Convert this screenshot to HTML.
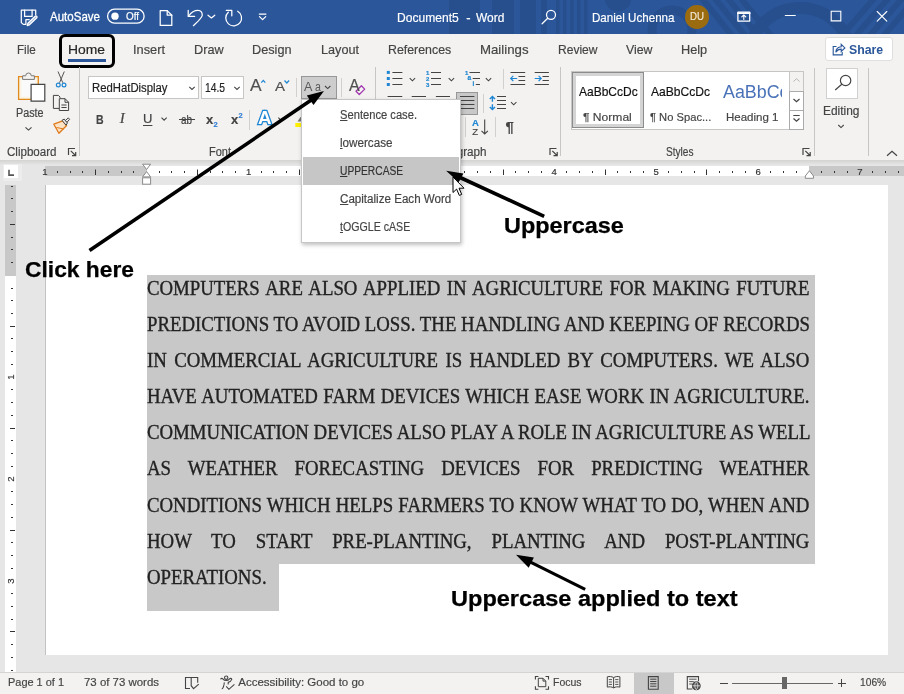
<!DOCTYPE html>
<html lang="en"><head><meta charset="utf-8"><title>Document5 - Word</title>
<style>

html,body{margin:0;padding:0}
body{width:904px;height:694px;position:relative;overflow:hidden;background:#e6e6e6;font-family:"Liberation Sans",sans-serif}
#app{position:absolute;left:0;top:0;width:904px;height:694px;overflow:hidden;will-change:transform}
.a{position:absolute}
.t{position:absolute;white-space:pre;display:inline-block;transform-origin:0 0;-webkit-text-stroke-width:.18px}
svg{position:absolute;overflow:visible}
.vs{position:absolute;width:1px;background:#c8c6c4}
.ln{position:absolute;white-space:pre;font:20px/1 "Liberation Serif",serif;color:#222;-webkit-text-stroke:.35px #222;left:147.200px;width:704.7px;transform-origin:0 0;text-align:justify;text-align-last:justify}
u{text-decoration:underline;text-underline-offset:1px}

</style></head>
<body>
<div id="app">
<div class="a" style="left:0px;top:0px;width:904px;height:33.5px;background:#2b579a"></div>
<svg style="left:0;top:0;overflow:hidden" width="904" height="34" viewBox="0 0 904 34"><g fill="none" stroke="#274f8e">
<path d="M449 0h31v34h-31zM492 0h22v34h-22zM520 0h16v34h-16zM541 0h6v34h-6zM556 0h3.500v34h-3.500zM563 0h3.500v34h-3.500zM570 0h3.500v34h-3.500zM577 0h3.500v34h-3.500zM584 0h3.500v34h-3.500z" fill="#274f8e" stroke="none"/>
<circle cx="618" cy="-2" r="13.500" fill="#274f8e" stroke="none"/>
<circle cx="672" cy="30" r="20" stroke-width="9"/>
<path d="M700 -4l34 42M713 -4l34 42M726 -4l34 42M739 -4l34 42" stroke-width="6"/>
<circle cx="800" cy="60" r="52" stroke-width="12"/>
<path d="M838 40l40-46M852 40l40-46M866 40l40-46M880 40l40-46" stroke-width="6"/>
</g></svg>
<span class="t" style="left:50.00px;top:10.00px;font:400 13px/1 'Liberation Sans',sans-serif;color:#fff;transform:scaleX(0.8869);-webkit-text-stroke:.3px #fff;">AutoSave</span>
<svg style="left:0;top:0" width="160" height="34" viewBox="0 0 160 34"><rect x="107.600" y="9.200" width="36.500" height="13.900" rx="6.950" fill="none" stroke="#fff" stroke-width="1.300"/><circle cx="115" cy="16.150" r="3.700" fill="#fff"/></svg>
<span class="t" style="left:125.80px;top:11.21px;font:400 10.5px/1 'Liberation Sans',sans-serif;color:#fff;transform:scaleX(0.9412);">Off</span>
<span class="t" style="left:397.30px;top:10.90px;font:400 13px/1 'Liberation Sans',sans-serif;color:#fff;transform:scaleX(0.9280);">Document5</span>
<span class="t" style="left:466.30px;top:10.90px;font:400 13px/1 'Liberation Sans',sans-serif;color:#fff;">-</span>
<span class="t" style="left:476.30px;top:10.90px;font:400 13px/1 'Liberation Sans',sans-serif;color:#fff;transform:scaleX(0.9180);">Word</span>
<span class="t" style="left:591.50px;top:10.90px;font:400 13px/1 'Liberation Sans',sans-serif;color:#fff;transform:scaleX(0.8917);">Daniel Uchenna</span>
<div class="a" style="left:685px;top:5.3px;width:23.5px;height:23.5px;border-radius:50%;background:#9a6b0f"></div>
<span class="t" style="left:689.80px;top:11.47px;font:400 11.5px/1 'Liberation Sans',sans-serif;color:#f3e9d6;transform:scaleX(0.8421);">DU</span>
<div class="a" style="left:0px;top:33.5px;width:904px;height:126.5px;background:#f3f2f1"></div>
<div class="a" style="left:0px;top:160px;width:904px;height:5px;background:linear-gradient(#d4d3d2,#e6e6e6)"></div>
<span class="t" style="left:16.80px;top:42.80px;font:400 13px/1 'Liberation Sans',sans-serif;color:#444;transform:scaleX(0.8972);">File</span>
<span class="t" style="left:68.00px;top:42.80px;font:400 13px/1 'Liberation Sans',sans-serif;color:#262626;transform:scaleX(1.0667);">Home</span>
<span class="t" style="left:133.00px;top:42.80px;font:400 13px/1 'Liberation Sans',sans-serif;color:#444;transform:scaleX(0.9841);">Insert</span>
<span class="t" style="left:194.30px;top:42.80px;font:400 13px/1 'Liberation Sans',sans-serif;color:#444;transform:scaleX(0.9788);">Draw</span>
<span class="t" style="left:252.30px;top:42.80px;font:400 13px/1 'Liberation Sans',sans-serif;color:#444;transform:scaleX(0.9761);">Design</span>
<span class="t" style="left:321.00px;top:42.80px;font:400 13px/1 'Liberation Sans',sans-serif;color:#444;transform:scaleX(0.9732);">Layout</span>
<span class="t" style="left:388.40px;top:42.80px;font:400 13px/1 'Liberation Sans',sans-serif;color:#444;transform:scaleX(0.9506);">References</span>
<span class="t" style="left:480.30px;top:42.80px;font:400 13px/1 'Liberation Sans',sans-serif;color:#444;transform:scaleX(1.0170);">Mailings</span>
<span class="t" style="left:558.30px;top:42.80px;font:400 13px/1 'Liberation Sans',sans-serif;color:#444;transform:scaleX(0.9267);">Review</span>
<span class="t" style="left:626.30px;top:42.80px;font:400 13px/1 'Liberation Sans',sans-serif;color:#444;transform:scaleX(0.9480);">View</span>
<span class="t" style="left:681.30px;top:42.80px;font:400 13px/1 'Liberation Sans',sans-serif;color:#444;transform:scaleX(0.9794);">Help</span>
<div class="a" style="left:68px;top:59px;width:38px;height:2.6000000000000014px;background:#2b579a"></div>
<div class="a" style="left:59px;top:34px;width:50px;height:28px;border:3px solid #000;border-radius:6px"></div>
<div class="a" style="left:825.200px;top:37.300px;width:65.500px;height:21.300px;background:#fff;border:1px solid #e1dfdd;border-radius:3px"></div>
<span class="t" style="left:848.80px;top:42.80px;font:700 13px/1 'Liberation Sans',sans-serif;color:#2b579a;transform:scaleX(0.9463);-webkit-text-stroke-width:0;">Share</span>
<div class="a" style="left:79px;top:67px;width:1px;height:89px;background:#c8c6c4"></div>
<div class="a" style="left:375px;top:67px;width:1px;height:89px;background:#c8c6c4"></div>
<div class="a" style="left:560px;top:67px;width:1px;height:89px;background:#c8c6c4"></div>
<div class="a" style="left:814px;top:68px;width:1px;height:88px;background:#c8c6c4"></div>
<div class="a" style="left:868px;top:68px;width:1px;height:88px;background:#c8c6c4"></div>
<div class="a" style="left:296.3px;top:78px;width:1.0px;height:19px;background:#d2d0ce"></div>
<div class="a" style="left:341px;top:78px;width:1px;height:19px;background:#d2d0ce"></div>
<div class="a" style="left:249px;top:109.5px;width:1px;height:20.5px;background:#d2d0ce"></div>
<div class="a" style="left:502.5px;top:69px;width:1.0px;height:20px;background:#d2d0ce"></div>
<div class="a" style="left:482.5px;top:94px;width:1.0px;height:19px;background:#d2d0ce"></div>
<div class="a" style="left:464.5px;top:117px;width:1.0px;height:20px;background:#d2d0ce"></div>
<div class="a" style="left:495px;top:117px;width:1px;height:20px;background:#d2d0ce"></div>
<span class="t" style="left:15.50px;top:106.64px;font:400 12px/1 'Liberation Sans',sans-serif;color:#444;transform:scaleX(0.8961);">Paste</span>
<span class="t" style="left:7.00px;top:145.84px;font:400 12px/1 'Liberation Sans',sans-serif;color:#444;transform:scaleX(0.9635);">Clipboard</span>
<span class="t" style="left:209.00px;top:145.84px;font:400 12px/1 'Liberation Sans',sans-serif;color:#444;transform:scaleX(0.9161);">Font</span>
<span class="t" style="left:431.50px;top:145.84px;font:400 12px/1 'Liberation Sans',sans-serif;color:#444;transform:scaleX(0.9724);">Paragraph</span>
<span class="t" style="left:665.50px;top:145.84px;font:400 12px/1 'Liberation Sans',sans-serif;color:#444;transform:scaleX(0.8413);">Styles</span>
<span class="t" style="left:823.00px;top:104.84px;font:400 12px/1 'Liberation Sans',sans-serif;color:#444;transform:scaleX(0.9945);">Editing</span>
<div class="a" style="left:88px;top:76px;width:108.800px;height:20.600px;background:#fff;border:1px solid #c8c6c4"></div>
<div class="a" style="left:201px;top:76px;width:40.800px;height:20.600px;background:#fff;border:1px solid #c8c6c4"></div>
<span class="t" style="left:91.50px;top:81.64px;font:400 12px/1 'Liberation Sans',sans-serif;color:#222;transform:scaleX(0.9432);">RedHatDisplay</span>
<span class="t" style="left:204.50px;top:81.64px;font:400 12px/1 'Liberation Sans',sans-serif;color:#222;transform:scaleX(0.8562);">14.5</span>
<div class="a" style="left:301.200px;top:76px;width:34.200px;height:21px;background:#cdcdcd;border:1px solid #979797"></div>
<span class="t" style="left:304.30px;top:80.76px;font:400 12.8px/1 'Liberation Sans',sans-serif;color:#5a5a5a;transform:scaleX(0.9828);-webkit-text-stroke-width:0;">A</span>
<span class="t" style="left:314.60px;top:80.76px;font:400 12.8px/1 'Liberation Sans',sans-serif;color:#5a5a5a;transform:scaleX(0.8281);-webkit-text-stroke-width:0;">a</span>
<div class="a" style="left:456.300px;top:92.300px;width:20px;height:20.600px;background:#c8c8c8;border:1px solid #979797"></div>
<span class="t" style="left:96.00px;top:112.57px;font:700 13.5px/1 'Liberation Sans',sans-serif;color:#444;transform:scaleX(0.7795);">B</span>
<span class="t" style="left:119.80px;top:111.44px;font:400 15px/1 'Liberation Serif',serif;color:#444;font-style:italic;">I</span>
<span class="t" style="left:143.00px;top:112.30px;font:400 13px/1 'Liberation Sans',sans-serif;color:#444;text-decoration:underline;text-underline-offset:1.5px;">U</span>
<span class="t" style="left:181.00px;top:113.84px;font:400 12px/1 'Liberation Sans',sans-serif;color:#444;transform:scaleX(0.8234);">ab</span>
<div class="a" style="left:178.5px;top:119.3px;width:16.0px;height:1.0px;background:#444"></div>
<span class="t" style="left:206.00px;top:113.00px;font:700 13px/1 'Liberation Sans',sans-serif;color:#444;">x</span>
<span class="t" style="left:213.50px;top:121.15px;font:700 7.5px/1 'Liberation Sans',sans-serif;color:#2b7cd3;">2</span>
<span class="t" style="left:231.00px;top:113.00px;font:700 13px/1 'Liberation Sans',sans-serif;color:#444;">x</span>
<span class="t" style="left:238.50px;top:111.65px;font:700 7.5px/1 'Liberation Sans',sans-serif;color:#2b7cd3;">2</span>
<div class="a" style="left:570.5px;top:70.5px;width:231.200px;height:57.300px;background:#fff;border:1px solid #c8c6c4"></div>
<div class="a" style="left:572.200px;top:72.200px;width:69.700px;height:53.800px;border:1px solid #8c8c8c;box-shadow:inset 0 0 0 3px #d4d4d4"></div>
<span class="t" style="left:578.80px;top:86.37px;font:400 12.2px/1 'Liberation Sans',sans-serif;color:#111;transform:scaleX(0.9847);">AaBbCcDc</span>
<span class="t" style="left:583.00px;top:110.88px;font:400 11.6px/1 'Liberation Sans',sans-serif;color:#444;transform:scaleX(1.0425);">¶ Normal</span>
<span class="t" style="left:650.50px;top:86.37px;font:400 12.2px/1 'Liberation Sans',sans-serif;color:#111;transform:scaleX(0.9898);">AaBbCcDc</span>
<span class="t" style="left:649.50px;top:110.88px;font:400 11.6px/1 'Liberation Sans',sans-serif;color:#444;transform:scaleX(0.9639);">¶ No Spac...</span>
<div class="a" style="left:720px;top:74px;width:61.5px;height:30px;overflow:hidden"><span class="t" style="left:2.50px;top:9.26px;font:400 18px/1 'Liberation Sans',sans-serif;color:#4a72b8;transform:scaleX(0.9917);-webkit-text-stroke-width:0;">AaBbCc</span></div>
<span class="t" style="left:725.50px;top:110.88px;font:400 11.6px/1 'Liberation Sans',sans-serif;color:#444;transform:scaleX(0.9932);">Heading 1</span>
<div class="a" style="left:789.4px;top:70.5px;width:12.300px;height:57.300px;background:#f3f2f1;border:1px solid #c8c6c4"></div>
<div class="a" style="left:789.4px;top:90.6px;width:12.300px;height:18.400px;background:#fff;border:1px solid #ababab"></div>
<div class="a" style="left:789.4px;top:109.6px;width:12.300px;height:18.200px;background:#fff;border:1px solid #ababab"></div>
<div class="a" style="left:825.800px;top:68.200px;width:30px;height:28.500px;background:#fff;border:1px solid #d2d0ce"></div>
<div class="a" style="left:44.5px;top:166px;width:859.5px;height:10px;background:#fff"></div>
<div class="a" style="left:44.5px;top:166px;width:102.0px;height:10px;background:#c8c8c8"></div>
<div class="a" style="left:809.3px;top:166px;width:94.70000000000005px;height:10px;background:#c8c8c8"></div>
<div class="a" style="left:3.3px;top:163.5px;width:18.500px;height:17.700px;background:#ececec"></div><div class="a" style="left:4px;top:165px;width:14.200px;height:12.800px;background:#fff"></div>
<svg style="left:0;top:0" width="904" height="190" viewBox="0 0 904 190"><path d="M9 169.800v5.300h5" fill="none" stroke="#555" stroke-width="1.600"/>
<path d="M57.5 171v2 M70.5 171v2 M82.5 171v2 M95.5 169.500v5.500 M108.5 171v2 M121.5 171v2 M133.5 171v2 M159.5 171v2 M171.5 171v2 M184.5 171v2 M197.5 169.500v5.500 M210.5 171v2 M222.5 171v2 M235.5 171v2 M261.5 171v2 M273.5 171v2 M286.5 171v2 M299.5 169.500v5.500 M312.5 171v2 M324.5 171v2 M337.5 171v2 M363.5 171v2 M375.5 171v2 M388.5 171v2 M401.5 169.500v5.500 M413.5 171v2 M426.5 171v2 M439.5 171v2 M464.5 171v2 M477.5 171v2 M490.5 171v2 M503.5 169.500v5.500 M515.5 171v2 M528.5 171v2 M541.5 171v2 M566.5 171v2 M579.5 171v2 M592.5 171v2 M605.5 169.500v5.500 M617.5 171v2 M630.5 171v2 M643.5 171v2 M668.5 171v2 M681.5 171v2 M694.5 171v2 M706.5 169.500v5.500 M719.5 171v2 M732.5 171v2 M745.5 171v2 M770.5 171v2 M783.5 171v2 M796.5 171v2 M821.5 171v2 M834.5 171v2 M847.5 171v2 M872.5 171v2 M885.5 171v2 M898.5 171v2" stroke="#333" stroke-width="1" fill="none"/>
<path d="M142.6 164.2h8l-4 5.3zM142.6 176.9l4-5.3 4 5.3z" fill="#fff" stroke="#8a8a8a" stroke-width="1"/><rect x="142.6" y="177.8" width="8" height="6.4" fill="#fff" stroke="#8a8a8a"/>
<path d="M805.300 178.300v-2.300l4.100-5.200 4.100 5.200v2.300z" fill="#fff" stroke="#8a8a8a" stroke-width="1"/>
</svg>
<span class="t" style="left:42.20px;top:166.86px;font:400 9.5px/1 'Liberation Sans',sans-serif;color:#333;">1</span>
<span class="t" style="left:245.90px;top:166.86px;font:400 9.5px/1 'Liberation Sans',sans-serif;color:#333;">1</span>
<span class="t" style="left:347.80px;top:166.86px;font:400 9.5px/1 'Liberation Sans',sans-serif;color:#333;">2</span>
<span class="t" style="left:449.70px;top:166.86px;font:400 9.5px/1 'Liberation Sans',sans-serif;color:#333;">3</span>
<span class="t" style="left:551.60px;top:166.86px;font:400 9.5px/1 'Liberation Sans',sans-serif;color:#333;">4</span>
<span class="t" style="left:653.50px;top:166.86px;font:400 9.5px/1 'Liberation Sans',sans-serif;color:#333;">5</span>
<span class="t" style="left:755.40px;top:166.86px;font:400 9.5px/1 'Liberation Sans',sans-serif;color:#333;">6</span>
<span class="t" style="left:857.30px;top:166.86px;font:400 9.5px/1 'Liberation Sans',sans-serif;color:#333;">7</span>
<div class="a" style="left:5px;top:185px;width:11px;height:487.5px;background:#fff"></div>
<div class="a" style="left:5px;top:185px;width:11px;height:90.80000000000001px;background:#c8c8c8"></div>
<div class="a" style="left:45.3px;top:185px;width:842.7px;height:470px;background:#fff;border-left:1px solid #c2c2c2;box-sizing:border-box"></div>
<svg style="left:0;top:0" width="20" height="672" viewBox="0 0 20 672"><path d="M11 186.5h2 M11 198.5h2 M11 211.5h2 M10 224.5h5 M11 237.5h2 M11 249.5h2 M11 262.5h2 M11 288.5h2 M11 300.5h2 M11 313.5h2 M10 326.5h5 M11 338.5h2 M11 351.5h2 M11 364.5h2 M11 389.5h2 M11 402.5h2 M11 415.5h2 M10 428.5h5 M11 440.5h2 M11 453.5h2 M11 466.5h2 M11 491.5h2 M11 504.5h2 M11 517.5h2 M10 530.5h5 M11 542.5h2 M11 555.5h2 M11 568.5h2 M11 593.5h2 M11 606.5h2 M11 619.5h2 M10 631.5h5 M11 644.5h2 M11 657.5h2 M11 670.5h2" stroke="#333" stroke-width="1" fill="none"/></svg>
<span class="t" style="left:5px;top:371px;width:12px;height:12px;font:9.500px/12px 'Liberation Sans',sans-serif;color:#333;text-align:center;transform-origin:50% 50%;transform:rotate(-90deg)">1</span>
<span class="t" style="left:5px;top:472.8px;width:12px;height:12px;font:9.500px/12px 'Liberation Sans',sans-serif;color:#333;text-align:center;transform-origin:50% 50%;transform:rotate(-90deg)">2</span>
<span class="t" style="left:5px;top:574.6px;width:12px;height:12px;font:9.500px/12px 'Liberation Sans',sans-serif;color:#333;text-align:center;transform-origin:50% 50%;transform:rotate(-90deg)">3</span>
<div class="a" style="left:146.8px;top:275px;width:667.8px;height:288.5px;background:#c8c8c8"></div>
<div class="a" style="left:146.8px;top:563px;width:131.8px;height:47.799999999999955px;background:#c8c8c8"></div>
<div class="ln" style="top:277.65px;transform:scaleX(0.94)">COMPUTERS ARE ALSO APPLIED IN AGRICULTURE FOR MAKING FUTURE</div>
<div class="ln" style="top:313.81px;transform:scaleX(0.94)">PREDICTIONS TO AVOID LOSS. THE HANDLING AND KEEPING OF RECORDS</div>
<div class="ln" style="top:349.97px;transform:scaleX(0.94)">IN COMMERCIAL AGRICULTURE IS HANDLED BY COMPUTERS. WE ALSO</div>
<div class="ln" style="top:386.13px;transform:scaleX(0.94)">HAVE AUTOMATED FARM DEVICES WHICH EASE WORK IN AGRICULTURE.</div>
<div class="ln" style="top:422.29px;transform:scaleX(0.94)">COMMUNICATION DEVICES ALSO PLAY A ROLE IN AGRICULTURE AS WELL</div>
<div class="ln" style="top:458.45px;transform:scaleX(0.94)">AS WEATHER FORECASTING DEVICES FOR PREDICTING WEATHER</div>
<div class="ln" style="top:494.61px;transform:scaleX(0.94)">CONDITIONS WHICH HELPS FARMERS TO KNOW WHAT TO DO, WHEN AND</div>
<div class="ln" style="top:530.77px;transform:scaleX(0.94)">HOW TO START PRE-PLANTING, PLANTING AND POST-PLANTING</div>
<div class="ln" style="top:566.93px;transform:scaleX(0.94);text-align-last:left;width:auto">OPERATIONS.</div>
<div class="a" style="left:0px;top:672.5px;width:904px;height:21.5px;background:#f3f2f1"></div>
<div class="a" style="left:0px;top:672px;width:904px;height:1px;background:#d6d4d2"></div>
<div class="a" style="left:634.3px;top:673px;width:39.5px;height:21px;background:#c8c8c8"></div>
<span class="t" style="left:8.30px;top:677.47px;font:400 11.5px/1 'Liberation Sans',sans-serif;color:#444;transform:scaleX(0.9519);">Page 1 of 1</span>
<span class="t" style="left:84.30px;top:677.47px;font:400 11.5px/1 'Liberation Sans',sans-serif;color:#444;transform:scaleX(0.9942);">73 of 73 words</span>
<span class="t" style="left:238.30px;top:677.47px;font:400 11.5px/1 'Liberation Sans',sans-serif;color:#444;">Accessibility: Good to go</span>
<span class="t" style="left:553.00px;top:677.47px;font:400 11.5px/1 'Liberation Sans',sans-serif;color:#444;transform:scaleX(0.9129);">Focus</span>
<span class="t" style="left:859.80px;top:677.47px;font:400 11.5px/1 'Liberation Sans',sans-serif;color:#444;transform:scaleX(0.8905);">106%</span>
<div class="a" style="left:732.4px;top:682.6px;width:100.60000000000002px;height:1.0px;background:#666"></div>
<div class="a" style="left:782px;top:677px;width:4.7999999999999545px;height:12px;background:#666"></div>
<div class="a" style="left:719.7px;top:682.6px;width:8.299999999999955px;height:1.0px;background:#444"></div>
<div class="a" style="left:837.8px;top:682.6px;width:8.0px;height:1.0px;background:#444"></div>
<div class="a" style="left:841.3px;top:679px;width:1.0px;height:8.200000000000045px;background:#444"></div>
<svg style="left:0;top:0" width="904" height="34" viewBox="0 0 904 34"><g fill="none" stroke="#fff" stroke-width="1.25" stroke-linejoin="round" stroke-linecap="round">
<!-- save -->
<path d="M35.700 14.800v-4.600h-14.400v12.400l2 1.800h2.600v-4.900h3.300"/><path d="M24.600 10.200v6.200h7.500v-6.200"/>
<path d="M27.200 25.600l0.700-2.300 7.300-7a1.100 1.100 0 0 1 1.600 1.500l-7.300 7z" fill="#fff" fill-opacity=".55"/>
<!-- new doc -->
<path d="M160.2 10.6h7l4.6 4.6v10.2h-11.6z"/><path d="M167.2 10.6v4.6h4.6"/>
<!-- undo -->
<path d="M188.2 10.4v6h6.400"/><path d="M188.600 16c2.500-3.500 6-5.700 9.400-5.700c3 0 4.600 2.500 4.200 5.200c-0.400 2.600-2.600 4.400-8.800 10.200"/>
<path d="M208 15.200l3.400 2.800 3.400-2.800" stroke-width="1.2"/>
<!-- redo -->
<path d="M226.300 10.400h5.500v5.400"/><path d="M237.700 11.200a7.900 7.900 0 1 1 -9.400 1"/>
<!-- qat -->
<path d="M259.300 14h6.600"/><path d="M259.500 16.600l3.100 3 3.100-3"/>
<!-- search -->
<circle cx="551.000" cy="14.800" r="4.500"/><path d="M547.700 18.200l-5.600 5.600"/>
<!-- ribbon display -->
<path d="M737.900 12h11.800v9h-11.800z"/><path d="M737.900 13.200h11.800" stroke-width="1.800"/><path d="M743.800 19.500v-4.300M741.800 16.800l2-2 2 2" stroke-width="1.100"/>
<!-- min max close -->
<path d="M785.300 15.500h10" stroke-width="1.100"/>
<path d="M831.200 11.300h9.600v9.600h-9.600z" stroke-width="1.100" stroke-linejoin="miter"/>
<path d="M877.200 11.500l9.600 9.600M886.800 11.500l-9.600 9.600" stroke-width="1.100"/>
</g></svg>
<svg style="left:0;top:0" width="904" height="162" viewBox="0 0 904 162"><g fill="none" stroke="#444" stroke-width="1" stroke-linecap="butt">
<!-- share icon -->
<g stroke="#2b579a" stroke-width="1.100"><path d="M836.500 46.500h-3.300v8.400h9v-3"/><path d="M835.800 52.300c0.200-3.400 2.300-5.400 5.400-5.600v-2.400l3.700 3.600-3.700 3.600v-2.400c-2.300 0-4 0.900-5.400 3.200z"/></g>
<!-- paste -->
<path d="M18.600 76.600h19.700v22.700h-19.700z" fill="#fdf3e1" stroke="#e08a1e" stroke-width="1.300"/>
<path d="M21.300 79.200h14.300v17.500h-14.300z" fill="#fafafa" stroke="none"/>
<path d="M22.600 79.400v-3.600h3.100a2.800 2.800 0 0 1 5.600 0h3.100v3.600z" fill="#f3f2f1" stroke="#777"/>
<path d="M31.100 84.400h13.700v16.700h-13.700z" fill="#fff" stroke="#444" stroke-width="1.200"/>
<path d="M25.500 127.300l3 2.800 3-2.800" stroke-width="1.100"/>
<!-- cut -->
<path d="M58 71.500l4.800 11.300M64.300 71.500l-4.800 11.300" stroke="#555"/>
<circle cx="58.300" cy="85" r="1.900" stroke="#1e86d2" stroke-width="1.200"/><circle cx="64" cy="85" r="1.900" stroke="#1e86d2" stroke-width="1.200"/>
<!-- copy -->
<path d="M59 108.400h-5.600v-13h5l1.600 1.600v1.400" /><path d="M59.300 98.700h5.800l3.500 3.500v8.300h-9.300z" fill="#f3f2f1"/><path d="M65 98.700v3.600h3.600M61.400 105h5.200M61.400 107.500h5.200"/>
<!-- format painter -->
<path d="M53.800 124.200l8.800-3.400 4 4.700-7.700 7.700z" fill="#fbe3c8" stroke="#e07a1a" stroke-width="1.300" stroke-linejoin="round"/><path d="M56.500 127.500l7.500 1.500" stroke="#e07a1a"/>
<path d="M62 120.300l2.200-1.200 3.200 3.800-1.300 2.300z" fill="#f3f2f1" stroke="#444" stroke-linejoin="round"/><path d="M65.300 120.600l3-2.700 1.300 1.400-2.600 3z" fill="#f3f2f1" stroke="#444" stroke-linejoin="round"/>
<!-- launchers -->
<g stroke="#444" stroke-width="1.200"><path d="M68.500 155v-6.500h6.500M70.800 150.800l4.700 4.700M75.700 152v3.700h-3.700"/>
<path d="M550 155v-6.500h6.500M552.300 150.800l4.700 4.700M557.200 152v3.700h-3.700"/>
<path d="M803 155v-6.500h6.500M805.300 150.800l4.700 4.700M810.200 152v3.700h-3.700"/></g>
<!-- combobox carets -->
<path d="M189.300 86.800l2.700 2.600 2.700-2.600M234.300 86.800l2.700 2.600 2.700-2.600M325.000 86l2.700 2.600 2.700-2.600M161.500 117.700l2.600 2.500 2.600-2.500M278.300 117.700l2.600 2.500 2.600-2.500" stroke-width="1.100"/>
<!-- grow/shrink carets -->
<path d="M261.300 82.700l2-2.300 2 2.300M284.500 80.500l2.300 2.500 2.300-2.500" stroke="#1e86d2" stroke-width="1.200"/>
<!-- eraser -->
<path d="M356 91.200l5.400-5.400 3.300 3.300-5.400 5.400z" fill="#f3f2f1" stroke="#a23ab0" stroke-width="1.300" stroke-linejoin="round"/>
<!-- highlighter -->
<path d="M295.300 123h6.500v4h-6.500z" fill="#ffef00" stroke="none"/><path d="M297.500 121.500l3-4.500h1.500v4.500z" fill="#777" stroke="none"/>
<!-- bullets -->
<g fill="#1e86d2" stroke="none"><rect x="386.800" y="70.900" width="3" height="3"/><rect x="386.800" y="77" width="3" height="3"/><rect x="386.800" y="83" width="3" height="3"/></g>
<path d="M392.400 72.500h10M392.400 78.500h10M392.400 84.500h10"/>
<path d="M409.700 78.200l2.700 2.600 2.700-2.600M448.700 78.200l2.700 2.600 2.700-2.600M485.800 78.200l2.700 2.600 2.700-2.600M511 102.200l2.700 2.600 2.700-2.600" stroke-width="1.100"/>
<!-- numbering -->
<path d="M431 72.500h10M431 78.500h10M431 84.500h10"/>
<!-- multilevel -->
<path d="M469.500 72.500h10.500M472.700 78.500h7.300M475.800 84.500h4.200"/>
<!-- indent -->
<path d="M510.500 72.500h14.700M518.500 76.500h6.700M518.500 80.500h6.700M510.500 84.500h14.700"/>
<path d="M510.700 78.500h6.500M513.300 75.800l-2.600 2.600 2.600 2.600" stroke="#1e86d2" stroke-width="1.200"/>
<path d="M534.700 72.500h14.200M542.500 76.500h6.400M542.500 80.500h6.400M534.700 84.500h14.200"/>
<path d="M534.700 78.500h6.500M538.600 75.800l2.600 2.600-2.600 2.600" stroke="#1e86d2" stroke-width="1.200"/>
<!-- align row -->
<path d="M387.600 96.500h14.700M387.600 100.500h10M387.600 104.500h14.700M387.600 108.500h10"/>
<path d="M411.700 96.500h14.300M414 100.500h9.700M411.700 104.500h14.300M414 108.500h9.700"/>
<path d="M435.900 96.500h14.100M440 100.500h10M435.900 104.500h14.100M440 108.500h10"/>
<path d="M460 96.500h14.400M460 100.500h14.400M460 104.500h14.400M460 108.500h14.400"/>
<!-- line spacing -->
<path d="M497 96.500h9M497 100.500h9M497 104.500h9M497 108.500h9"/>
<path d="M492.400 96.400v5.400M492.400 104.200v5.400M489.800 99l2.600-2.600 2.600 2.600M489.800 107l2.600 2.600 2.600-2.600" stroke="#1e86d2" stroke-width="1.400"/>
<!-- sort arrow -->
<path d="M484.700 119.600v14.400M481.500 130.800l3.200 3.200 3.200-3.200" stroke-width="1.100"/>
<!-- gallery carets -->
<path d="M793.500 81.500l3-2.800 3 2.800" stroke="#b5b5b5"/><path d="M793.500 99l3 2.800 3-2.800" stroke-width="1.200"/><path d="M793.300 115.500h6.400" /><path d="M793.500 118.500l3 2.800 3-2.800" stroke-width="1.200"/>
<!-- editing search -->
<circle cx="845.600" cy="80.500" r="5.200" stroke-width="1.200"/><path d="M841.800 84.200l-6.600 5.800" stroke-width="1.200"/>
<path d="M838.300 125l2.700 2.600 2.700-2.600" stroke-width="1.100"/>
<!-- collapse ribbon -->
<path d="M887 155.800l5-4.600 5 4.600" stroke-width="1.200"/>
</g></svg>
<span class="t" style="left:249.70px;top:77.04px;font:400 17.2px/1 'Liberation Sans',sans-serif;color:#505050;transform:scaleX(1.0114);">A</span>
<span class="t" style="left:275.30px;top:80.17px;font:400 13.5px/1 'Liberation Sans',sans-serif;color:#505050;transform:scaleX(1.1092);">A</span>
<span class="t" style="left:348.90px;top:77.04px;font:400 17.2px/1 'Liberation Sans',sans-serif;color:#505050;transform:scaleX(0.9330);">A</span>
<span class="t" style="left:258.00px;top:109.29px;font:700 18.8px/1 'Liberation Sans',sans-serif;color:#fff;-webkit-text-stroke:2.600px #1e86d2;paint-order:stroke fill;">A</span>
<span class="t" style="left:426.00px;top:69.52px;font:700 6px/1 'Liberation Sans',sans-serif;color:#1e86d2;">1</span>
<span class="t" style="left:426.00px;top:75.62px;font:700 6px/1 'Liberation Sans',sans-serif;color:#1e86d2;">2</span>
<span class="t" style="left:426.00px;top:81.62px;font:700 6px/1 'Liberation Sans',sans-serif;color:#1e86d2;">3</span>
<span class="t" style="left:465.00px;top:69.52px;font:700 6px/1 'Liberation Sans',sans-serif;color:#1e86d2;">1</span>
<span class="t" style="left:467.60px;top:75.20px;font:700 6.5px/1 'Liberation Sans',sans-serif;color:#1e86d2;">a</span>
<span class="t" style="left:472.60px;top:81.40px;font:700 6.5px/1 'Liberation Sans',sans-serif;color:#1e86d2;">i</span>
<span class="t" style="left:472.00px;top:118.16px;font:700 9.5px/1 'Liberation Sans',sans-serif;color:#1e86d2;">A</span>
<span class="t" style="left:472.30px;top:126.76px;font:400 9.5px/1 'Liberation Sans',sans-serif;color:#444;">Z</span>
<span class="t" style="left:505.50px;top:118.80px;font:700 15px/1 'Liberation Sans',sans-serif;color:#444;">¶</span>
<svg style="left:0;top:0" width="904" height="694" viewBox="0 0 904 694"><g fill="none" stroke="#444" stroke-width="1.100">
<path d="M190 688.500h-4.500v-11h12.200v5.200M191.200 677.500v8.200l2.300 3 5.300-4.600"/>
<circle cx="226.200" cy="677.700" r="1.700"/><path d="M220.600 679.400c0.300-1.300 1.600-1.300 2.200-0.600c0.900 1.100 1.800 1.700 3.400 1.700s2.500-0.600 3.400-1.700c0.600-0.700 1.900-0.700 2.200 0.600c-0.700 1.700-2.300 2.600-3.600 3v2.200M224.200 682.400c0.300 2.200-0.500 3.600-1 4.800c-0.400 1-0.500 1.700-1.500 1.600M226.200 686.400l2.700 2.900 5.500-5"/>
<path d="M535.400 679.500v-3h3M545.500 676.500h3v3M548.500 686.200v3h-3M538.400 689.200h-3v-3"/><path d="M538.300 678.300h4.700l2.800 2.800v5.600h-7.500zM543 678.300v2.800h2.800" stroke-width="1"/>
<path d="M613.600 677.600c-2-1.200-4-1.300-6.300-0.800v10.300c2.300-0.500 4.300-0.400 6.300 0.800c2-1.200 4-1.300 6.300-0.800v-10.300c-2.300-0.500-4.300-0.400-6.300 0.800zM613.600 677.600v10.300" stroke-width="1"/><path d="M608.800 679.600h3.200M608.800 682h3.200M608.800 684.400h3.200M615.200 679.600h3.200M615.200 682h3.200M615.200 684.400h3.200" stroke-width=".9"/>
<path d="M648.400 676.600h9.800v12.600h-9.800z"/><path d="M650.200 679.200h6.200M650.200 681.500h6.200M650.200 683.800h6.200M650.200 686.200h6.200" stroke-width="1"/>
<path d="M692.500 689h-5.200v-12.400h11.200v4.600"/><path d="M689.200 679.200h7.400M689.200 681.600h4.600M689.200 684h3.200" stroke-width=".9"/><circle cx="696.300" cy="685.800" r="3.900" fill="#555"/><path d="M692.400 685.800h7.800M696.300 681.900c-2 2.200-2 5.600 0 7.800M696.300 681.900c2 2.200 2 5.600 0 7.800" stroke="#f3f2f1" stroke-width=".7"/>
</g></svg>
<div class="a" style="left:300.600px;top:98.600px;width:158.500px;height:142.600px;background:#fff;border:1px solid #c6c6c6;box-shadow:1px 2px 4px rgba(0,0,0,.25)"></div>
<div class="a" style="left:303.2px;top:157.2px;width:156.0px;height:27.600000000000023px;background:#c6c6c6"></div>
<span class="t" style="left:339.70px;top:108.84px;font:400 12px/1 'Liberation Sans',sans-serif;color:#444;transform:scaleX(0.9307);"><u>S</u>entence case.</span>
<span class="t" style="left:339.70px;top:137.04px;font:400 12px/1 'Liberation Sans',sans-serif;color:#444;transform:scaleX(0.9717);"><u>l</u>owercase</span>
<span class="t" style="left:339.70px;top:164.84px;font:400 12px/1 'Liberation Sans',sans-serif;color:#333;transform:scaleX(0.8523);"><u>U</u>PPERCASE</span>
<span class="t" style="left:339.70px;top:192.84px;font:400 12px/1 'Liberation Sans',sans-serif;color:#444;transform:scaleX(0.9664);"><u>C</u>apitalize Each Word</span>
<span class="t" style="left:339.70px;top:220.84px;font:400 12px/1 'Liberation Sans',sans-serif;color:#444;transform:scaleX(0.8857);"><u>t</u>OGGLE cASE</span>
<svg style="left:451.500px;top:175.500px" width="14" height="21" viewBox="0 0 14 21"><path d="M1 1v15.5l3.6-3.4 2.7 6.3 2.4-1-2.7-6.2h5z" fill="#fff" stroke="#000" stroke-width="1" stroke-linejoin="miter"/></svg>
<svg style="left:0;top:0" width="904" height="694" viewBox="0 0 904 694"><g stroke="#000" fill="none" stroke-linecap="butt">
<path d="M89.500 250.500L312 99.600" stroke-width="3.600"/><path d="M544.200 216.300L459 177" stroke-width="3.600"/><path d="M585.200 589.300L530 561.800" stroke-width="3.100"/></g>
<g fill="#000"><path d="M324 91L306.800 95.600L313.500 105z"/><path d="M446.100 170.800L463.400 173.500L458.800 182.200z"/><path d="M516 554.800L533.900 557.500L528.700 567.700z"/></g></svg>
<span class="t" style="left:24.60px;top:258.28px;font:700 22.7px/1 'Liberation Sans',sans-serif;color:#000;transform:scaleX(1.0050);-webkit-text-stroke:.25px #000;">Click here</span>
<span class="t" style="left:504.10px;top:214.65px;font:700 21.2px/1 'Liberation Sans',sans-serif;color:#000;transform:scaleX(1.1056);-webkit-text-stroke:.25px #000;">Uppercase</span>
<span class="t" style="left:450.60px;top:588.05px;font:700 21.2px/1 'Liberation Sans',sans-serif;color:#000;transform:scaleX(1.1115);-webkit-text-stroke:.25px #000;">Uppercase applied to text</span>
</div>
</body></html>
